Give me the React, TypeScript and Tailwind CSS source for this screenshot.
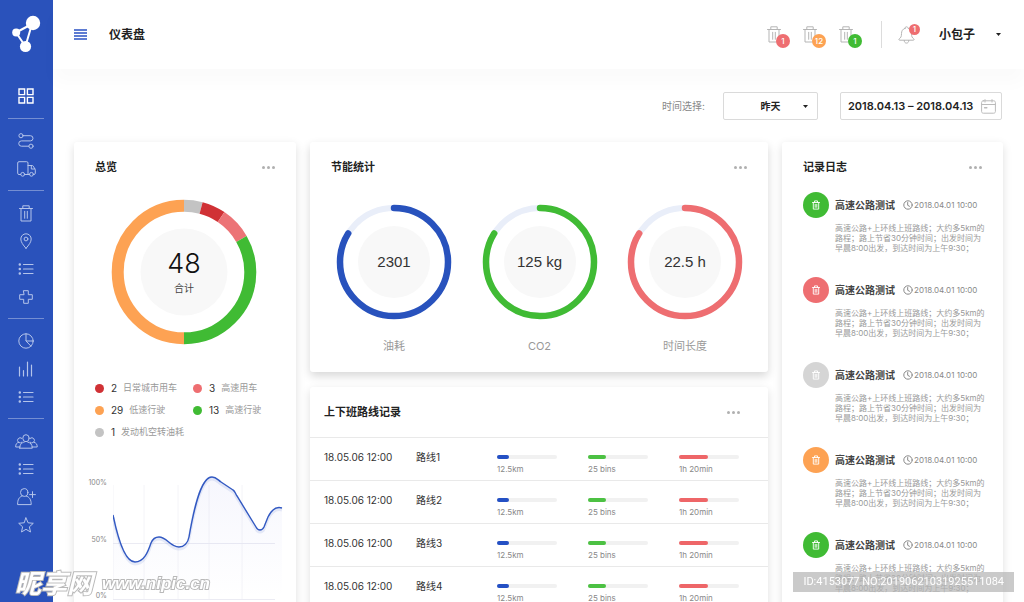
import type { ReactNode } from "react";

// Type definitions
type IconProps = {
  w: number;
  h: number;
  children: ReactNode;
  className?: string;
};

type Slice = { color: string; from: number; to: number };

type LogEntry = { id: number; bg: string };

// Icons
const Icon = ({ w, h, children, className }: IconProps) => (
  <svg
    width={w}
    height={h}
    viewBox={`0 0 ${w} ${h}`}
    fill="none"
    stroke="currentColor"
    strokeWidth="1"
    strokeLinecap="round"
    strokeLinejoin="round"
    className={className}
    aria-hidden="true"
  >
    {children}
  </svg>
);

const GridIcon = () => (
  <Icon w={16} h={16}>
    <g strokeWidth="1.4" strokeLinejoin="miter">
      <path d="M1 1h5.6v5.6H1zM9.4 1H15v5.6H9.4zM1 9.4h5.6V15H1zM9.4 9.4H15V15H9.4z" />
    </g>
  </Icon>
);

const RouteIcon = () => (
  <Icon w={16} h={16}>
    <circle cx="3" cy="2.7" r="2.1" />
    <circle cx="13" cy="13.2" r="2.1" />
    <path d="M5.2 2.7h7.2a2.6 2.6 0 0 1 0 5.2H3.4a2.6 2.6 0 0 0 0 5.3h7.4" />
  </Icon>
);

const TruckIcon = () => (
  <Icon w={19} h={16}>
    <path d="M3.6 13.5H2A1.3 1.3 0 0 1 .7 12.2V2A1.3 1.3 0 0 1 2 .7h7.7A1.3 1.3 0 0 1 11 2v11.5H7.8" />
    <path d="M11 4.5h4.2c.5 0 .8.2 1 .6l1.9 3.2c.2.3.2.5.2.8v3.1c0 .8-.5 1.3-1.3 1.3h-.3M11 13.5h1.6M14.3 4.8V8h3.6" />
    <circle cx="5.7" cy="13.3" r="1.9" />
    <circle cx="14.5" cy="13.3" r="1.9" />
  </Icon>
);

const TrashIcon = () => (
  <Icon w={14} h={17}>
    <path d="M.5 3.5h13M3.8 3.3V.8h6.400v2.5M2 3.5V16h10V3.5M5.7 6.3v7M8.3 6.3v7" />
  </Icon>
);

const SmallTrashIcon = () => (
  <Icon w={8} h={10}>
    <path d="M.5 2.5h7M2.5 2.3V.9h3v1.4M1.3 2.5v6.6h5.4V2.5M3.2 4.3v3M4.8 4.3v3" strokeWidth=".9" />
  </Icon>
);

const PinIcon = () => (
  <Icon w={12} h={16}>
    <path d="M6 15.3C3 11.9.8 9 .8 6a5.2 5.2 0 0 1 10.4 0c0 3-2.2 5.9-5.2 9.3z" />
    <circle cx="6" cy="6" r="1.9" />
  </Icon>
);

const ListIcon = () => (
  <Icon w={16} h={12}>
    <path d="M5.5 1.5h9.5M5.5 6h9.5M5.5 10.5h9.5" strokeWidth="1.2" />
    <path d="M1.8 1.5h.01M1.8 6h.01M1.8 10.5h.01" strokeWidth="2.5" />
  </Icon>
);

const PlusIcon = () => (
  <Icon w={14} h={14}>
    <path d="M4.7.7h4.6v4h4v4.6h-4v4H4.7v-4h-4V4.7h4z" />
  </Icon>
);

const PieIcon = () => (
  <Icon w={16} h={16}>
    <circle cx="8" cy="8" r="7.2" />
    <path d="M8 .8V8h7.2M8 8l5 5.2" />
  </Icon>
);

const BarsIcon = () => (
  <Icon w={16} h={16}>
    <path d="M1.5 6v9M5.5 9.5V15M9.5 1v14M13.5 4v11" strokeWidth="1.2" />
  </Icon>
);

const GroupIcon = () => (
  <Icon w={23} h={15}>
    <ellipse cx="11" cy="4.2" rx="3.2" ry="3.5" />
    <path d="M4.7 14.2c0-3.9 1.7-5.3 4.7-6.2M12.6 8c3 .9 4.7 2.3 4.7 6.2H4.7" />
    <path d="M7 8.2a2.6 2.6 0 1 1-.2-3.9M5 13H.7c0-2.8.6-4.1 3-4.7M15 8.2a2.6 2.6 0 1 0 .2-3.9M17 13h5.2c0-2.8-.8-4.1-3.2-4.7" />
  </Icon>
);

const UserPlusIcon = () => (
  <Icon w={19} h={18}>
    <ellipse cx="7.2" cy="4.5" rx="3.7" ry="3.9" />
    <path d="M5.2 8C2 9 .6 11.5.6 16.6h13.6C14.2 11.5 12.5 9 9.2 8M15.5 3.7v5.8M12.6 6.6h5.8" />
  </Icon>
);

const StarIcon = () => (
  <Icon w={16} h={16}>
    <path d="M8 .9l2.1 4.9 5.2.5-3.9 3.5 1.1 5.2L8 12.3 3.5 15l1.1-5.2L.7 6.3l5.2-.5z" />
  </Icon>
);

const BellIcon = () => (
  <Icon w={17} h={18}>
    <path d="M7 2.3c0-1 .6-1.5 1.500-1.5s1.5.5 1.5 1.500c2.5.8 3.5 2.9 3.5 5.2 0 3 .6 4.2 2.3 5.4.5.4.3 1.3-.4 1.3H1.6c-.7 0-.9-.9-.4-1.3 1.7-1.2 2.3-2.4 2.3-5.4C3.5 5.2 4.5 3.1 7 2.3zM6.2 14.4c0 1.7.9 2.7 2.3 2.7s2.3-1 2.3-2.7" />
  </Icon>
);

const CalendarIcon = () => (
  <Icon w={15} h={15}>
    <path d="M2.3 1.8h10.4c1 0 1.7.7 1.7 1.7v9c0 1-.7 1.7-1.7 1.7H2.3c-1 0-1.7-.7-1.7-1.7v-9c0-1 .7-1.7 1.7-1.7zM.6 5.5h13.8M4 .6v2.5M11 .6v2.5" />
    <path d="M3.6 8.7h2.2" strokeWidth="1.5" />
  </Icon>
);

const ClockIcon = () => (
  <Icon w={10} h={10}>
    <circle cx="5" cy="5" r="4.2" />
    <path d="M4.7 2.5v2.8l1.8 1" />
  </Icon>
);

const Caret = () => (
  <svg width="5" height="3" viewBox="0 0 5 3" fill="currentColor" aria-hidden="true">
    <path d="M0 0h5L2.5 3z" />
  </svg>
);

const Logo = () => (
  <svg width="29" height="38" viewBox="0 0 29 38" fill="#fff" aria-label="logo">
    <path d="M4 17.5L20 9M4 17.5l9.5 14M20 9l-6.5 22" stroke="#fff" strokeWidth="2" />
    <circle cx="21" cy="8" r="7.2" />
    <circle cx="4.2" cy="17.5" r="4" />
    <circle cx="13.5" cy="31.5" r="5.6" />
  </svg>
);

const navSections = [
  [{ label: "路线", icon: <RouteIcon /> }, { label: "车辆", icon: <TruckIcon /> }],
  [
    { label: "垃圾桶", icon: <TrashIcon /> },
    { label: "位置", icon: <PinIcon /> },
    { label: "站点列表", icon: <ListIcon /> },
    { label: "维护", icon: <PlusIcon /> },
  ],
  [
    { label: "统计", icon: <PieIcon /> },
    { label: "报表", icon: <BarsIcon /> },
    { label: "报表列表", icon: <ListIcon /> },
  ],
  [
    { label: "团队", icon: <GroupIcon /> },
    { label: "成员列表", icon: <ListIcon /> },
    { label: "添加成员", icon: <UserPlusIcon /> },
    { label: "收藏", icon: <StarIcon /> },
  ],
];

const slices: Slice[] = [
  { color: "#c3c3c3", from: 0, to: 15 },
  { color: "#d03135", from: 15, to: 34 },
  { color: "#ec7376", from: 34, to: 60 },
  { color: "#40bb34", from: 60, to: 180 },
  { color: "#fda253", from: 180, to: 360 },
];

const legend = [
  { count: 2, label: "日常城市用车", dot: "bg-[#d03135]" },
  { count: 3, label: "高速用车", dot: "bg-[#ee6e71]" },
  { count: 29, label: "低速行驶", dot: "bg-[#fda253]" },
  { count: 13, label: "高速行驶", dot: "bg-[#40bb34]" },
  { count: 1, label: "发动机空转油耗", dot: "bg-[#c3c3c3]" },
];

const gauges = [
  { value: "2301", label: "油耗", color: "#2852bd" },
  { value: "125 kg", label: "CO2", color: "#40bb34" },
  { value: "22.5 h", label: "时间长度", color: "#ee6e71" },
];

const routes = ["路线1", "路线2", "路线3", "路线4", "路线5"];

const metrics = [
  { text: "12.5km", percent: 20, bar: "bg-[#2450c4]" },
  { text: "25 bins", percent: 30, bar: "bg-[#4cc143]" },
  { text: "1h 20min", percent: 48, bar: "bg-[#ee6668]" },
];

const logs: LogEntry[] = [
  { id: 1, bg: "bg-[#40bb34]" },
  { id: 2, bg: "bg-[#ee6e71]" },
  { id: 3, bg: "bg-[#d5d5d5]" },
  { id: 4, bg: "bg-[#fda253]" },
  { id: 5, bg: "bg-[#40bb34]" },
];

const bins = [
  { count: 1, bg: "bg-[#ee6e71]" },
  { count: 12, bg: "bg-[#fda253]" },
  { count: 1, bg: "bg-[#40bb34]" },
];

// Sidebar
const Sidebar = () => (
  <aside className="w-[53px] shrink-0 bg-[#2a52bb] pt-[15px] pr-[9px] pl-2">
    <div className="flex justify-center">
      <Logo />
    </div>
    <nav className="mt-[29px] text-[#b4c4ea]">
      <div className="pb-2">
        <button aria-label="仪表盘" className="flex h-7 w-full items-center justify-center text-white">
          <GridIcon />
        </button>
      </div>
      {navSections.map((items, i) => (
        <div key={i} className="border-t border-white/35 pt-2 pb-[7px]">
          {items.map((item) => (
            <button
              key={item.label}
              aria-label={item.label}
              className="flex h-7 w-full items-center justify-center"
            >
              {item.icon}
            </button>
          ))}
        </div>
      ))}
    </nav>
  </aside>
);

// Top bar
const Header = () => (
  <header className="flex h-[69px] shrink-0 items-center pr-[23px] pl-[21px] shadow-[0_14px_16px_rgba(0,0,0,0.02)]">
    <button aria-label="菜单" className="text-[#2a52c4]">
      <svg width="13" height="11" viewBox="0 0 13 11" stroke="currentColor" strokeWidth="1.5">
        <path d="M0 1h13M0 4h13M0 7h13M0 10h13" />
      </svg>
    </button>
    <h1 className="ml-[22px] text-xs font-bold text-[#222]">仪表盘</h1>

    <div className="ml-auto flex items-center">
      <div className="flex gap-[22px] text-[#b5b5b5]">
        {bins.map((bin, i) => (
          <button key={i} aria-label="垃圾桶提醒" className="relative">
            <TrashIcon />
            <span
              className={`absolute top-2 left-[9px] flex size-3.5 items-center justify-center rounded-full text-[8px] leading-none font-medium text-white ${bin.bg}`}
            >
              {bin.count}
            </span>
          </button>
        ))}
      </div>
      <div className="ml-7 h-[27px] border-l border-[#dcdcdc]" />
      <button aria-label="通知" className="relative ml-4 text-[#b5b5b5]">
        <BellIcon />
        <span className="absolute -top-[2px] left-[11px] flex size-[11px] items-center justify-center rounded-full bg-[#ee6e71] text-[8px] leading-none font-medium text-white">
          1
        </span>
      </button>
      <button className="ml-6 flex items-center gap-[21px] text-xs font-bold text-[#222]">
        小包子
        <Caret />
      </button>
    </div>
  </header>
);

// Date filters
const Filters = () => (
  <div className="flex items-center justify-end pr-px text-[#222]">
    <label htmlFor="period" className="mr-[18px] text-[10px] text-[#888]">
      时间选择:
    </label>
    <div className="relative mr-[22px]">
      <select
        id="period"
        className="block h-7 w-[95px] appearance-none rounded-[2px] border border-[#dadada] bg-white text-[10px] font-bold [text-align-last:center]"
      >
        <option>昨天</option>
        <option>今天</option>
      </select>
      <span className="pointer-events-none absolute inset-y-0 right-2.5 flex items-center">
        <Caret />
      </span>
    </div>
    <label className="flex h-7 w-[162px] items-center rounded-[2px] border border-[#dadada] bg-white pr-[5px] pl-[7px]">
      <input
        aria-label="日期范围"
        defaultValue="2018.04.13 – 2018.04.13"
        className="min-w-0 flex-1 text-[11px] font-semibold outline-none"
      />
      <span className="text-[#bbb]">
        <CalendarIcon />
      </span>
    </label>
  </div>
);

const MoreButton = () => (
  <button aria-label="更多" className="flex gap-[2px]">
    <span className="size-[3px] rounded-full bg-[#b0b0b0]" />
    <span className="size-[3px] rounded-full bg-[#b0b0b0]" />
    <span className="size-[3px] rounded-full bg-[#b0b0b0]" />
  </button>
);

const CardHeader = ({ title }: { title: string }) => (
  <div className="flex items-center justify-between">
    <h2 className="text-[11px] leading-4 font-bold text-[#222]">{title}</h2>
    <MoreButton />
  </div>
);

// Usage line chart
const curve =
  "M0 41C6 70 13 88 22 88C31 88 35 78 38 69C40 64 43 63 46 63C54 63 57 73 66 73C71 73 75 69 76 63C80 40 87 3 99 3C103 3 105 6 108 8L120 16C122 17 122 19 124 22L143 53C145 57 149 57 151 53L155 43C158 37 163 32 169 34";

const UsageChart = () => (
  <div className="mt-[34px] flex justify-between pr-[13px] pl-3.5">
    <div className="flex h-[130px] w-[19px] flex-col justify-between pt-[5px] pb-1 text-right text-[7px] leading-[8px] text-[#888]">
      <span>100%</span>
      <span>50%</span>
      <span>0%</span>
    </div>
    <svg width="170" height="130" viewBox="0 0 170 130" fill="none">
      <defs>
        <linearGradient id="area" x1="0" y1="0" x2="0" y2="1">
          <stop offset="0" stopColor="#4a55d8" stopOpacity=".05" />
          <stop offset="1" stopColor="#4a55d8" stopOpacity="0" />
        </linearGradient>
      </defs>
      <path d="M0 11V125M31 11V125M65 11V125M96 11V125M129 11V125" stroke="#f4f4f8" />
      <path d="M0 69.5H162M0 125.5H162" stroke="#ebebf3" />
      <path d={`${curve}V125H0z`} fill="url(#area)" />
      <path d={curve} stroke="#2852bd" strokeOpacity=".1" strokeWidth="3" transform="translate(0 2)" />
      <path d={curve} stroke="#3259c2" strokeWidth="1.4" />
    </svg>
  </div>
);

// Overview card
const Overview = () => (
  <section className="rounded-[3px] bg-white shadow-[0_3px_10px_rgba(0,0,0,0.13)]">
    <div className="px-[21px] pt-[17px]">
      <CardHeader title="总览" />
      <div className="relative mt-6 flex justify-center pr-0.5">
        <svg width="146" height="146" viewBox="-73 -73 146 146" fill="none">
          <g transform="rotate(-90)">
            {slices.map((s) => (
              <circle
                key={s.color}
                r="66.3"
                stroke={s.color}
                strokeWidth="12"
                pathLength="360"
                strokeDasharray={`${s.to - s.from} 360`}
                strokeDashoffset={-s.from}
              />
            ))}
          </g>
          <circle r="43.5" fill="#f8f8f8" />
        </svg>
        <div className="absolute inset-0 flex flex-col items-center justify-center pr-0.5 text-center">
          <p className="text-[27px] leading-8 font-light text-[#111]">48</p>
          <p className="text-[10px] leading-4 text-[#444]">合计</p>
        </div>
      </div>
      <ul className="mt-[35px] grid grid-cols-[98px_1fr] gap-y-[6px]">
        {legend.map((item, i) => (
          <li
            key={item.label}
            className={`flex items-center text-[9px] leading-4 whitespace-nowrap text-[#999] ${i === 4 ? "col-span-2" : ""}`}
          >
            <span className={`mr-[7px] size-[9px] rounded-full ${item.dot}`} />
            <span className="mr-1.5 text-[10px] text-[#333]">{item.count}</span>
            {item.label}
          </li>
        ))}
      </ul>
    </div>
    <UsageChart />
    <div className="h-8" />
  </section>
);

// Energy saving gauges
const EnergyStats = () => (
  <section className="rounded-[3px] bg-white px-[21px] pt-[17px] pb-[18px] shadow-[0_4px_10px_rgba(0,0,0,0.16)]">
    <CardHeader title="节能统计" />
    <div className="mt-[29px] flex justify-between pr-1 pl-[5px]">
      {gauges.map((g) => (
        <figure key={g.label} className="flex flex-col items-center">
          <div className="relative">
            <svg width="116" height="116" viewBox="-58 -58 116 116" fill="none">
              <circle r="54" stroke="#e9eef9" strokeWidth="6" />
              <circle
                r="54"
                stroke={g.color}
                strokeWidth="6.5"
                strokeLinecap="round"
                pathLength="360"
                strokeDasharray="302 360"
                transform="rotate(-90)"
              />
              <circle r="36" fill="#f8f8f8" />
            </svg>
            <p className="absolute inset-0 flex items-center justify-center font-['Liberation_Sans'] text-[15px] text-[#333]">
              {g.value}
            </p>
          </div>
          <figcaption className="mt-[18px] text-[11px] leading-4 text-[#999]">{g.label}</figcaption>
        </figure>
      ))}
    </div>
  </section>
);

// Commute route records
const RouteRecords = () => (
  <section className="flex-1 rounded-[3px] bg-white shadow-[0_3px_10px_rgba(0,0,0,0.13)]">
    <div className="pt-[17px] pr-7 pb-[17px] pl-3.5">
      <CardHeader title="上下班路线记录" />
    </div>
    <table className="w-full table-fixed text-left">
      <tbody>
        {routes.map((route) => (
          <tr key={route} className="h-[43px] border-t border-[#e9e9e9] align-top">
            <td className="w-[106px] pt-[11px] pl-3.5 text-[10px] leading-4 whitespace-nowrap text-[#333]">
              18.05.06 12:00
            </td>
            <td className="w-[81px] pt-[11px] text-[10px] leading-4 text-[#333]">{route}</td>
            {metrics.map((m) => (
              <td key={m.text} className="w-[91px] pt-[17px] last:w-auto">
                <div className="h-1 w-[60px] rounded-full bg-[#f1f1f1]">
                  <div className={`h-1 rounded-full ${m.bar}`} style={{ width: `${m.percent}%` }} />
                </div>
                <p className="mt-1 text-[8px] leading-3 text-[#888]">{m.text}</p>
              </td>
            ))}
          </tr>
        ))}
      </tbody>
    </table>
  </section>
);

// Activity log
const ActivityLog = () => (
  <section className="rounded-[3px] bg-white pt-[17px] pl-[21px] shadow-[0_3px_10px_rgba(0,0,0,0.13)]">
    <div className="pr-[21px]">
      <CardHeader title="记录日志" />
    </div>
    <ul className="mt-[17px]">
      {logs.map((log) => (
        <li key={log.id} className="flex h-[85px] items-start gap-1.5">
          <span
            className={`flex size-[26px] shrink-0 items-center justify-center rounded-full text-white ${log.bg}`}
          >
            <SmallTrashIcon />
          </span>
          <div className="min-w-0 flex-1">
            <div className="flex h-[26px] items-center whitespace-nowrap">
              <h3 className="text-[10px] font-bold text-[#444]">高速公路测试</h3>
              <time className="ml-2 flex items-center gap-px text-[8px] text-[#888]">
                <ClockIcon />
                2018.04.01 10:00
              </time>
            </div>
            <p className="mt-[5px] pr-4 text-[8px] leading-[10px] text-[#999]">
              高速公路+上环线上班路线；大约多5km的路程；路上节省30分钟时间；出发时间为早晨8:00出发，到达时间为上午9:30；
            </p>
          </div>
        </li>
      ))}
    </ul>
  </section>
);

const Watermarks = () => (
  <>
    <div className="pointer-events-none fixed bottom-[6px] left-[15px] flex items-center gap-[9px] font-bold text-white italic [-webkit-text-stroke:2px_#b9b9b9] [paint-order:stroke_fill]">
      <span className="text-[26px] leading-6">昵享网</span>
      <span className="font-['Liberation_Sans'] text-[17px] leading-6">www.nipic.cn</span>
    </div>
    <div className="pointer-events-none fixed right-2.5 bottom-2.5 h-5 bg-[#b4b4b4]/70 px-2.5 font-[Roboto] text-[11px] leading-5 text-white">
      ID:4153077 NO:20190621031925511084
    </div>
  </>
);

export default function App() {
  return (
    <div className="flex h-screen overflow-hidden bg-white font-[Inter,'Noto_Sans_CJK_SC',sans-serif]">
      <Sidebar />
      <div className="flex min-w-0 flex-1 flex-col">
        <Header />
        <main className="min-h-0 flex-1 overflow-y-auto px-[21px] pt-[23px] [scrollbar-width:none]">
          <Filters />
          <div className="mt-[22px] grid grid-cols-[222px_minmax(0,1fr)_221px] gap-3.5">
            <Overview />
            <div className="flex flex-col gap-[15px]">
              <EnergyStats />
              <RouteRecords />
            </div>
            <ActivityLog />
          </div>
        </main>
      </div>
      <Watermarks />
    </div>
  );
}
